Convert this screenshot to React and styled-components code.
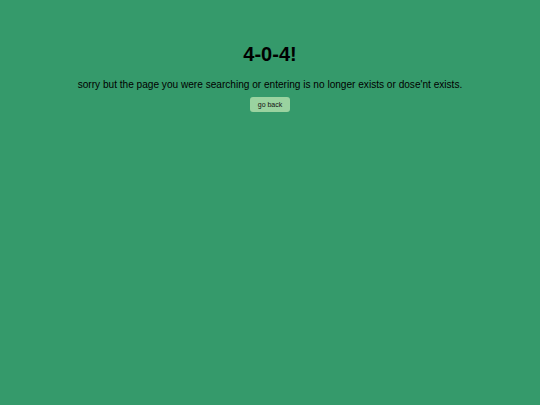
import React from "react";
import styled, { createGlobalStyle } from "styled-components";

const Global = createGlobalStyle`
  html, body { margin: 0; padding: 0; }
  body {
    background: #359a6b;
    font-family: "Liberation Sans", Arial, sans-serif;
    min-height: 405px;
  }
`;

const Page = styled.div`
  display: flex;
  flex-direction: column;
  align-items: center;
  padding-top: 42px;
  color: #000;
`;

const Title = styled.h1`
  margin: 0;
  font-size: 20px;
  font-weight: bold;
  line-height: 24px;
`;

const Message = styled.p`
  margin: 13px 0 0;
  font-size: 10.1px;
  line-height: 12px;
`;

const Button = styled.button`
  margin-top: 6px;
  background: #9ad3a0;
  border: none;
  border-radius: 3px;
  padding: 0 8px;
  height: 15px;
  font-family: "Liberation Sans", Arial, sans-serif;
  font-size: 7px;
  color: #111;
  cursor: pointer;
`;

export default function App() {
  return (
    <>
      <Global />
      <Page>
        <Title>4-0-4!</Title>
        <Message>
          sorry but the page you were searching or entering is no longer exists or dose'nt exists.
        </Message>
        <Button>go back</Button>
      </Page>
    </>
  );
}
